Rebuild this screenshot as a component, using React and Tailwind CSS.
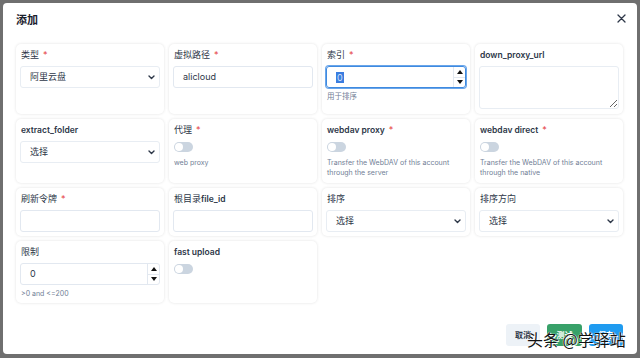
import React from "react";

const Star = () => <span className="text-[#e53e3e] ml-[4px] font-normal text-[9px]">*</span>;

const Label = ({ children, req }) => (
  <div className="pl-px text-[9px] leading-[12px] text-[#2d3748] whitespace-nowrap">
    {children}
    {req && <Star />}
  </div>
);

const En = ({ children }) => <span className="text-[8.5px] font-semibold">{children}</span>;

const Card = ({ children }) => (
  <div className="bg-white rounded-[5px] shadow-[0_0_3px_rgba(0,0,0,0.12)] px-[4px] pt-[5px] flex flex-col">
    {children}
  </div>
);

const Chevron = () => (
  <svg width="7" height="5" viewBox="0 0 7 5" className="text-[#2d3748]">
    <path d="M1 1l2.5 2.5L6 1" fill="none" stroke="currentColor" strokeWidth="1.4" strokeLinecap="round" strokeLinejoin="round" />
  </svg>
);

const Select = ({ value }) => (
  <div className="mt-[5px] h-[22px] rounded-[3px] border border-[#e8edf3] flex items-center justify-between pl-[9px] pr-[4px] text-[9px] text-[#2d3748]">
    <span>{value}</span>
    <Chevron />
  </div>
);

const Input = ({ value }) => (
  <div className="mt-[5px] h-[22px] rounded-[3px] border border-[#e2e8f0] flex items-center pl-[9px] text-[9px] text-[#2d3748]">
    {value}
  </div>
);

const Spinner = () => (
  <div className="w-[12px] h-full border-l border-[#e2e8f0] flex flex-col">
    <div className="flex-1 flex items-center justify-center border-b border-[#e2e8f0]">
      <svg width="6" height="4" viewBox="0 0 6 4"><polygon points="0,4 3,0 6,4" fill="#111" /></svg>
    </div>
    <div className="flex-1 flex items-center justify-center">
      <svg width="6" height="4" viewBox="0 0 6 4"><polygon points="0,0 6,0 3,4" fill="#111" /></svg>
    </div>
  </div>
);

const Toggle = () => (
  <div className="mt-[6px] ml-px w-[19px] h-[10px] rounded-full bg-[#cbd5e0] flex items-center px-[1px]">
    <div className="w-[8px] h-[8px] rounded-full bg-white" />
  </div>
);

const Help = ({ children, className = "" }) => (
  <div className={"pl-px leading-[10px] text-[#718096] " + className}>{children}</div>
);

export default function App() {
  return (
    <div className="w-[640px] h-[358px] bg-[#6f6f6f] pt-[3px] pl-[3px] font-[Inter,'Noto_Sans_CJK_SC',sans-serif] relative overflow-hidden">
      <div className="w-[634px] h-[351px] bg-white rounded-[4px] pl-[13px] pr-[14px] pt-[9px] pb-[8px] flex flex-col">
        <div className="flex justify-between items-start h-[32px]">
          <div className="text-[11px] leading-[16px] font-semibold text-[#1a202c]">添加</div>
          <svg width="9" height="9" viewBox="0 0 9 9" className="-mr-[3px] mt-[2px]">
            <path d="M1 1l7 7M8 1L1 8" stroke="#2d3748" strokeWidth="1.3" strokeLinecap="round" />
          </svg>
        </div>

        <div className="grid grid-cols-[repeat(4,148px)] grid-rows-[70px_64px_48px_62px] gap-x-[5px] gap-y-[5px]">
          <Card>
            <Label req>类型</Label>
            <Select value="阿里云盘" />
          </Card>
          <Card>
            <Label req>虚拟路径</Label>
            <Input value="alicloud" />
          </Card>
          <Card>
            <Label req>索引</Label>
            <div className="mt-[5px] h-[22px] rounded-[3px] border border-[#3f8ae0] shadow-[0_0_0_1px_#6aa6ea] flex items-center justify-between pl-[9px] text-[9px] text-[#2d3748]">
              <span className="bg-[#3b7de0] text-[#d6e4f7] leading-[11px] px-px">0</span>
              <Spinner />
            </div>
            <Help className="mt-[4px] text-[7.5px]">用于排序</Help>
          </Card>
          <Card>
            <Label><En>down_proxy_url</En></Label>
            <textarea
              readOnly
              defaultValue=""
              className="mt-[5px] h-[43px] w-full rounded-[3px] border border-[#e8edf3] outline-none text-[9px]"
            />
          </Card>

          <Card>
            <Label><En>extract_folder</En></Label>
            <Select value="选择" />
          </Card>
          <Card>
            <Label req>代理</Label>
            <Toggle />
            <Help className="mt-[6px] text-[7px]">web proxy</Help>
          </Card>
          <Card>
            <Label req><En>webdav proxy</En></Label>
            <Toggle />
            <Help className="mt-[6px] text-[7px]">Transfer the WebDAV of this account through the server</Help>
          </Card>
          <Card>
            <Label req><En>webdav direct</En></Label>
            <Toggle />
            <Help className="mt-[6px] text-[7px]">Transfer the WebDAV of this account through the native</Help>
          </Card>

          <Card>
            <Label req>刷新令牌</Label>
            <Input value="" />
          </Card>
          <Card>
            <Label>根目录<En>file_id</En></Label>
            <Input value="" />
          </Card>
          <Card>
            <Label>排序</Label>
            <Select value="选择" />
          </Card>
          <Card>
            <Label>排序方向</Label>
            <Select value="选择" />
          </Card>

          <Card>
            <Label>限制</Label>
            <div className="mt-[5px] h-[22px] rounded-[3px] border border-[#e2e8f0] flex items-center justify-between pl-[9px] text-[9px] text-[#2d3748]">
              <span>0</span>
              <Spinner />
            </div>
            <Help className="mt-[4px] text-[7px]">&gt;0 and &lt;=200</Help>
          </Card>
          <Card>
            <Label><En>fast upload</En></Label>
            <Toggle />
          </Card>
        </div>

        <div className="mt-auto flex justify-end gap-[7px]">
          <div className="w-[34px] h-[22px] rounded-[3px] bg-[#edf2f7] flex items-center justify-center text-[8px] font-semibold text-[#2d3748]">取消</div>
          <div className="w-[35px] h-[22px] rounded-[3px] bg-[#38a169] flex items-center justify-center text-[8px] font-semibold text-white">测试</div>
          <div className="w-[34px] h-[22px] rounded-[3px] bg-[#1f9bf0] flex items-center justify-center text-[8px] font-semibold text-white">保存</div>
        </div>
      </div>

      <div className="absolute left-[527px] top-[329px] text-[16px] leading-[20px] text-[#111] [text-shadow:0_0_1px_#fff,0_0_1px_#fff,1px_1px_0_#fff] font-['Noto_Sans_CJK_SC',sans-serif] whitespace-nowrap">
        头条 @学驿站
      </div>
    </div>
  );
}
